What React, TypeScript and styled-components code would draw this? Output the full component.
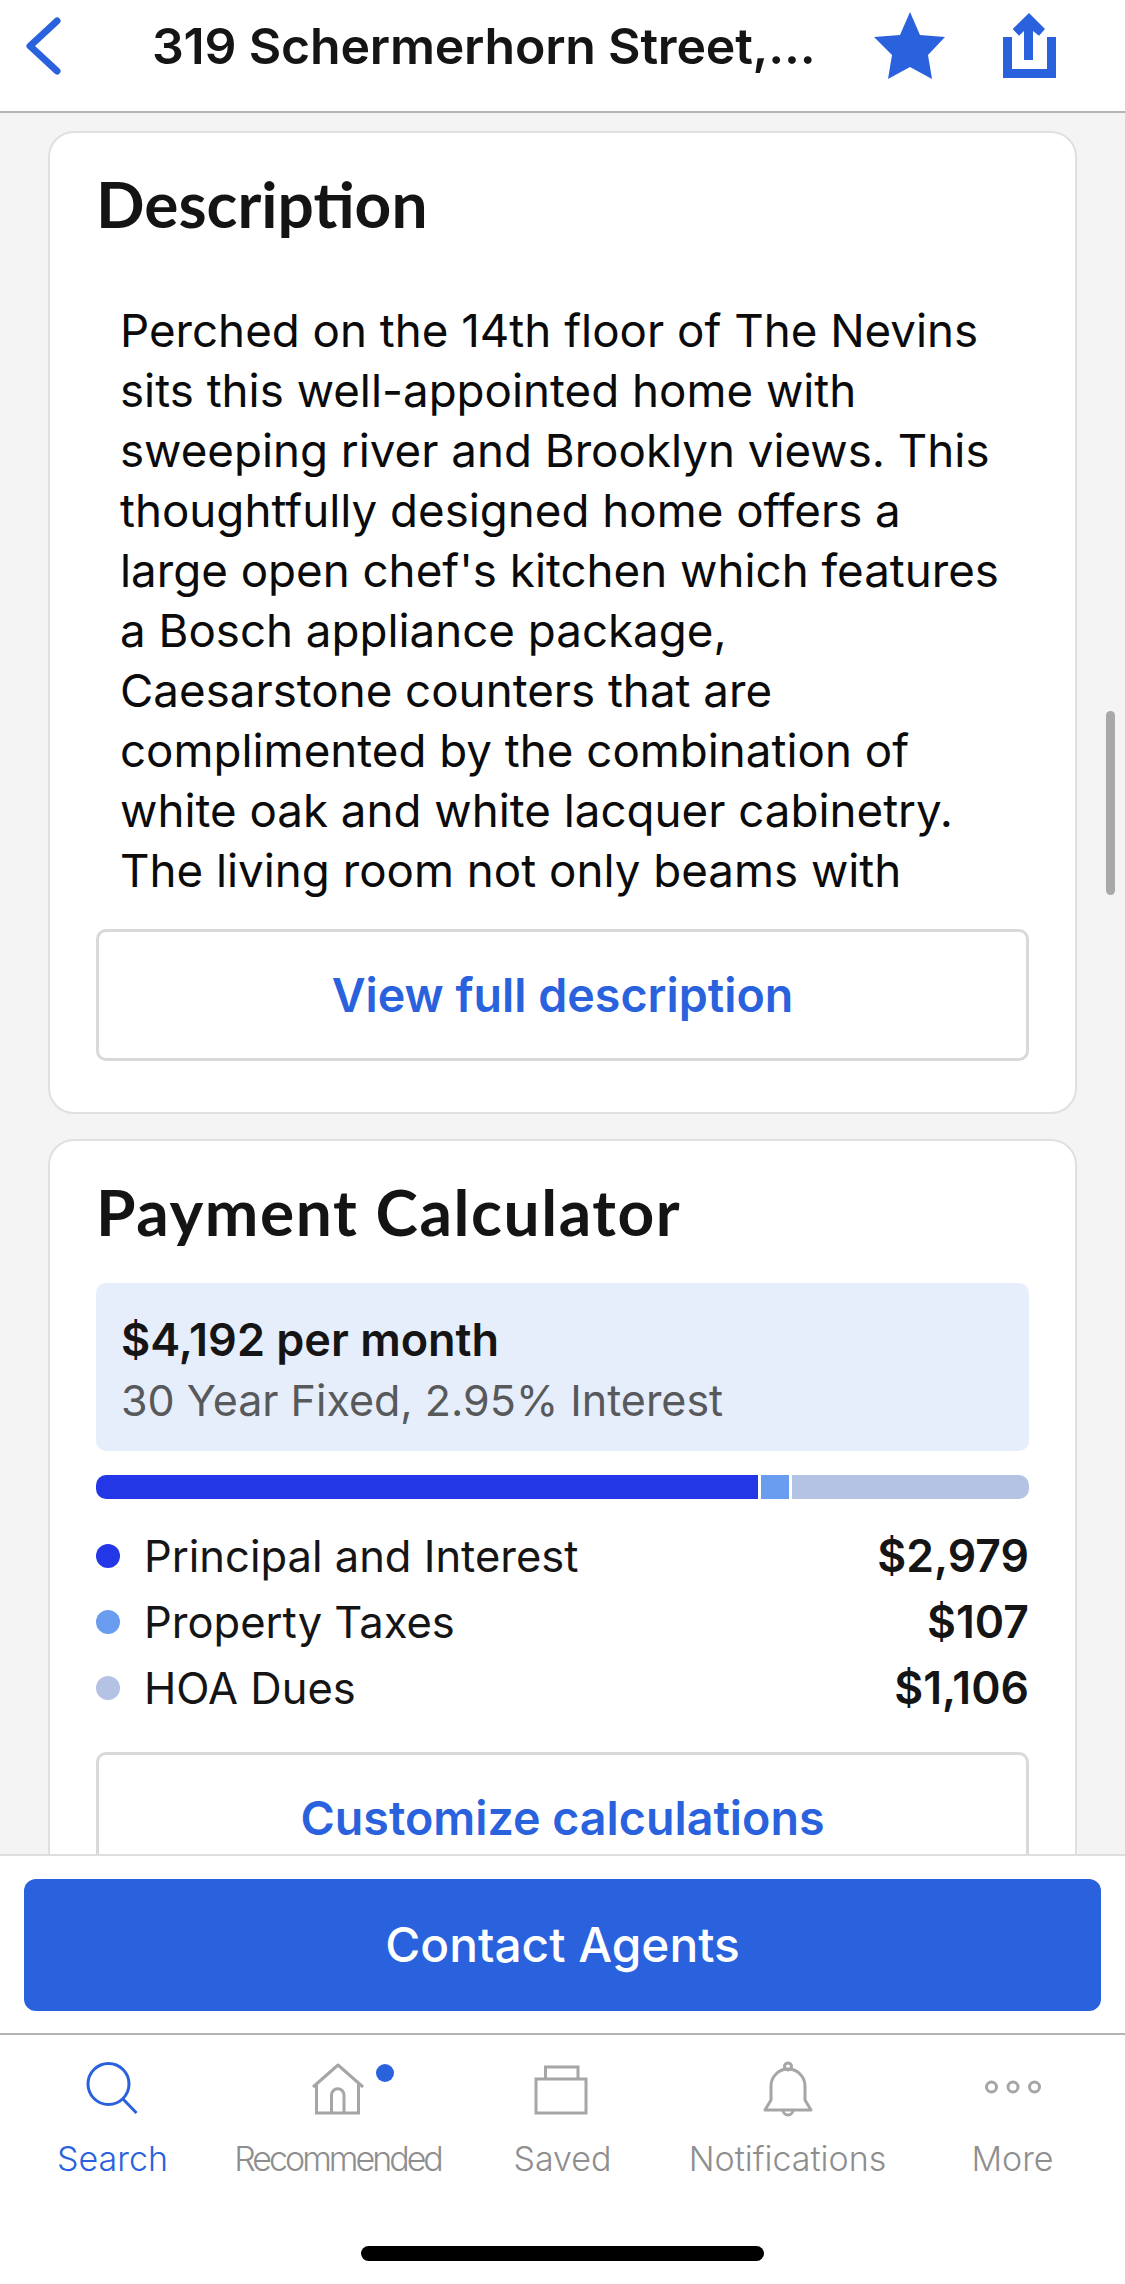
import styled, { createGlobalStyle } from "styled-components";

const BLUE = "#2a62de";

const GlobalStyle = createGlobalStyle`
  html, body {
    margin: 0;
    padding: 0;
    background: #fff;
  }
  * {
    box-sizing: border-box;
  }
`;

const Screen = styled.div`
  position: relative;
  width: 1125px;
  height: 2284px;
  display: flex;
  flex-direction: column;
  overflow: hidden;
  background: #fff;
  font-family: Inter, "Liberation Sans", sans-serif;
  color: #151515;
`;

const Header = styled.header`
  flex: 0 0 113px;
  display: flex;
  align-items: flex-start;
  border-bottom: 2px solid #b4b4b4;
  background: #fff;
`;

const BackIcon = styled.svg`
  width: 44px;
  height: 60px;
  margin: 16px 0 0 22px;
`;

const Title = styled.h1`
  flex: 1;
  margin: 18px 0 0 86px;
  font-size: 50px;
  line-height: 56px;
  font-weight: 600;
  letter-spacing: -0.2px;
  white-space: nowrap;
`;

const StarIcon = styled.svg`
  width: 73px;
  height: 69px;
  margin: 12px 57px 0 0;
`;

const ShareIcon = styled.svg`
  width: 54px;
  height: 65px;
  margin: 13px 68px 0 0;
`;

const Main = styled.main`
  flex: 1;
  min-height: 0;
  overflow: hidden;
  display: flex;
  flex-direction: column;
  gap: 25px;
  padding: 18px 48px 0;
  background: #f4f4f4;
`;

const Card = styled.section`
  flex: none;
  padding: 33px 46px 51px;
  background: #fff;
  border: 2px solid #e0e0e0;
  border-radius: 26px;
`;

const CardTitle = styled.h2<{ $tracking?: number }>`
  margin: 0;
  font-family: Lato, sans-serif;
  font-size: 64px;
  line-height: 76px;
  font-weight: 700;
  letter-spacing: ${(props) => props.$tracking ?? 0}px;
  color: #141414;
`;

const Description = styled.div`
  margin: 59px 0 0 24px;
  height: 628px;
  overflow: hidden;
  font-size: 45.7px;
  line-height: 60px;
  color: #0b0b0b;
`;

const Line = styled.span`
  display: block;
  white-space: nowrap;
`;

const OutlineButton = styled.div`
  height: 132px;
  display: flex;
  align-items: center;
  justify-content: center;
  border: 3px solid #d9d9d9;
  border-radius: 10px;
  font-size: 46.6px;
  font-weight: 600;
  color: ${BLUE};
`;

const Summary = styled.div`
  margin-top: 33px;
  height: 168px;
  padding: 29px 25px;
  background: #e6eefb;
  border-radius: 10px;
`;

const SummaryAmount = styled.div`
  font-size: 45px;
  line-height: 56px;
  font-weight: 600;
`;

const SummaryNote = styled.div`
  margin-top: 4px;
  font-size: 43px;
  line-height: 56px;
  color: #58595b;
`;

const Bar = styled.div`
  margin-top: 24px;
  height: 24px;
  display: flex;
  gap: 3px;
  border-radius: 10px;
  overflow: hidden;
`;

const Segment = styled.div<{ $grow: number; $color: string }>`
  flex: ${(props) => props.$grow} 0 0;
  background: ${(props) => props.$color};
`;

const Legend = styled.div`
  margin: 24px 0 31px;
`;

const LegendRow = styled.div`
  height: 66px;
  display: flex;
  align-items: center;
  font-size: 43.5px;
`;

const Dot = styled.span<{ $color: string }>`
  flex: none;
  width: 24px;
  height: 24px;
  margin-right: 24px;
  border-radius: 50%;
  background: ${(props) => props.$color};
`;

const LegendValue = styled.span`
  margin-left: auto;
  font-size: 44.5px;
  font-weight: 600;
`;

const Scrollbar = styled.div`
  position: absolute;
  top: 711px;
  left: 1106px;
  width: 9px;
  height: 184px;
  border-radius: 5px;
  background: #a8a8a8;
`;

const ContactBar = styled.div`
  flex: 0 0 181px;
  padding: 23px 24px 0;
  background: #fff;
  border-top: 2px solid #dedede;
  border-bottom: 2px solid #b4b4b4;
`;

const ContactButton = styled.div`
  height: 132px;
  display: flex;
  align-items: center;
  justify-content: center;
  background: ${BLUE};
  border-radius: 12px;
  font-size: 47.8px;
  font-weight: 500;
  color: #fff;
`;

const TabArea = styled.nav`
  flex: 0 0 249px;
  display: flex;
  flex-direction: column;
  background: #fff;
`;

const Tabs = styled.div`
  display: grid;
  grid-template-columns: repeat(5, 1fr);
  padding-top: 25px;
`;

const Tab = styled.div<{ $active?: boolean; $squeeze?: number }>`
  position: relative;
  display: flex;
  flex-direction: column;
  align-items: center;
  font-size: 34px;
  line-height: 40px;
  font-weight: 300;
  letter-spacing: ${(props) => props.$squeeze ?? 0}px;
  white-space: nowrap;
  color: ${(props) => (props.$active ? BLUE : "#8e8e8e")};
`;

const TabIcon = styled.svg<{ $active?: boolean }>`
  width: 60px;
  height: 60px;
  margin-bottom: 19px;
  fill: none;
  stroke: ${(props) => (props.$active ? BLUE : "#a6a6a6")};
  stroke-width: 3;
`;

const TabBadge = styled.span`
  position: absolute;
  top: 4px;
  left: 151px;
  width: 18px;
  height: 18px;
  border-radius: 50%;
  background: ${BLUE};
`;

const HomeIndicator = styled.div`
  align-self: center;
  width: 403px;
  height: 15px;
  margin-top: 67px;
  border-radius: 8px;
  background: #000;
`;

const descriptionLines = [
  "Perched on the 14th floor of The Nevins",
  "sits this well-appointed home with",
  "sweeping river and Brooklyn views. This",
  "thoughtfully designed home offers a",
  "large open chef's kitchen which features",
  "a Bosch appliance package,",
  "Caesarstone counters that are",
  "complimented by the combination of",
  "white oak and white lacquer cabinetry.",
  "The living room not only beams with",
];

const legend = [
  { label: "Principal and Interest", value: "$2,979", color: "#2437e6" },
  { label: "Property Taxes", value: "$107", color: "#6a9df0" },
  { label: "HOA Dues", value: "$1,106", color: "#b4c3e4" },
];

const App = () => {
  return (
    <Screen>
      <GlobalStyle />
      <Header>
        <BackIcon viewBox="0 0 44 60" fill="none" stroke={BLUE} strokeWidth="7" strokeLinecap="round" strokeLinejoin="round">
          <path d="M35 5 L8 30 L35 55" />
        </BackIcon>
        <Title>319 Schermerhorn Street,...</Title>
        <StarIcon viewBox="0 0 73 69" fill={BLUE}>
          <path d="M37 0 L47 23 L72 25 L55 43 L59 67 L37 55 L15 67 L19 43 L1 25 L27 23 Z" />
        </StarIcon>
        <ShareIcon viewBox="0 0 54 65" fill={BLUE}>
          <path d="M0 24 H9 V56 H44 V24 H53 V65 H0 Z" />
          <path d="M26 0 L42 16 L36 22.7 L30 18 V47 H21 V18 L16 22.7 L9.7 16 Z" />
        </ShareIcon>
      </Header>

      <Main>
        <Card>
          <CardTitle>Description</CardTitle>
          <Description>
            {descriptionLines.map((line) => (
              <Line key={line}>{line}</Line>
            ))}
          </Description>
          <OutlineButton>View full description</OutlineButton>
        </Card>

        <Card>
          <CardTitle $tracking={1.6}>Payment Calculator</CardTitle>
          <Summary>
            <SummaryAmount>$4,192 per month</SummaryAmount>
            <SummaryNote>30 Year Fixed, 2.95% Interest</SummaryNote>
          </Summary>
          <Bar>
            <Segment $grow={662} $color="#2437e6" />
            <Segment $grow={28} $color="#6a9df0" />
            <Segment $grow={237} $color="#b4c3e4" />
          </Bar>
          <Legend>
            {legend.map((item) => (
              <LegendRow key={item.label}>
                <Dot $color={item.color} />
                {item.label}
                <LegendValue>{item.value}</LegendValue>
              </LegendRow>
            ))}
          </Legend>
          <OutlineButton>Customize calculations</OutlineButton>
        </Card>
      </Main>

      <Scrollbar />

      <ContactBar>
        <ContactButton>Contact Agents</ContactButton>
      </ContactBar>

      <TabArea>
        <Tabs>
          <Tab $active>
            <TabIcon $active viewBox="0 0 60 60">
              <circle cx="25.5" cy="24" r="20.5" />
              <path d="M40 39 L53.5 53" />
            </TabIcon>
            Search
          </Tab>
          <Tab $squeeze={-3}>
            <TabIcon viewBox="0 0 60 60">
              <path d="M5 27 L30 5 L55 27" strokeLinejoin="round" />
              <path d="M8.5 24 V53 H50.5 V24" />
              <path d="M23.5 53 V35 A6.25 6.25 0 0 1 36 35 V53" />
            </TabIcon>
            <TabBadge />
            Recommended
          </Tab>
          <Tab>
            <TabIcon viewBox="0 0 60 60">
              <rect x="3" y="19" width="50" height="34" />
              <path d="M12.5 19 V7 H45 V19" />
            </TabIcon>
            Saved
          </Tab>
          <Tab>
            <TabIcon viewBox="0 0 60 60">
              <circle cx="30" cy="6.5" r="3.5" />
              <path d="M7 50 L13 40 V26 A17 17 0 0 1 47 26 V40 L53 50 Z" strokeLinejoin="round" />
              <path d="M25 50 A5 5 0 0 0 35 50" />
            </TabIcon>
            Notifications
          </Tab>
          <Tab>
            <TabIcon viewBox="0 0 60 60">
              <circle cx="8.5" cy="27" r="5" />
              <circle cx="30" cy="27" r="5" />
              <circle cx="51.5" cy="27" r="5" />
            </TabIcon>
            More
          </Tab>
        </Tabs>
        <HomeIndicator />
      </TabArea>
    </Screen>
  );
};

export default App;
